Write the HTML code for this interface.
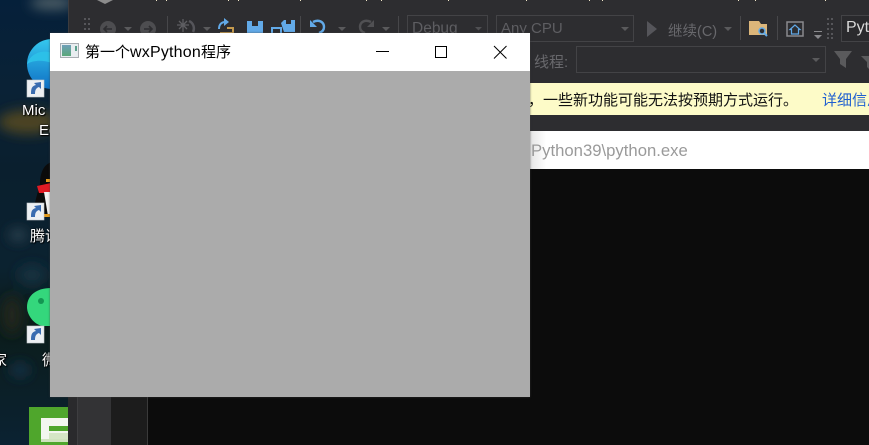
<!DOCTYPE html>
<html><head><meta charset="utf-8">
<style>
html,body{margin:0;padding:0;background:#0c0c0c}
#r{position:relative;width:869px;height:445px;overflow:hidden;background:#0c0c0c;font-family:"Liberation Sans","Noto Sans CJK SC",sans-serif}
.a{position:absolute}
.t{position:absolute;white-space:nowrap}
.dt{color:#fff;font-size:15px;text-shadow:0 0 2px #000,1px 1px 1px #000}
.box{position:absolute;box-sizing:border-box;border:1px solid #434346}
.dn{position:absolute;width:0;height:0;border-left:4px solid transparent;border-right:4px solid transparent;border-top:4px solid #5a5a5c}
</style></head><body><div id="r">

<!-- desktop -->
<svg class="a" style="left:0;top:0" width="70" height="445" viewBox="0 0 70 445">
<defs>
<linearGradient id="bg" x1="0" y1="0" x2="0" y2="1"><stop offset="0" stop-color="#05203a"/><stop offset=".2" stop-color="#0a2236"/><stop offset=".38" stop-color="#0a1f2e"/><stop offset=".6" stop-color="#0b2230"/><stop offset=".72" stop-color="#0b1c1a"/><stop offset="1" stop-color="#0b2232"/></linearGradient>
<filter id="b" x="-50%" y="-50%" width="200%" height="200%"><feGaussianBlur stdDeviation="6"/></filter>
<linearGradient id="ed" x1="0" y1="0" x2="0" y2="1"><stop offset="0" stop-color="#35c8ee"/><stop offset="1" stop-color="#0f6fc4"/></linearGradient>
</defs>
<rect width="70" height="445" fill="url(#bg)"/>
<g filter="url(#b)">
<ellipse cx="52" cy="3" rx="22" ry="6" fill="#56666c"/>
<ellipse cx="28" cy="122" rx="30" ry="12" fill="#4d4420"/>
<ellipse cx="18" cy="235" rx="9" ry="6" fill="#2f4552"/>
<ellipse cx="12" cy="315" rx="10" ry="20" fill="#20281a"/>
<ellipse cx="32" cy="275" rx="14" ry="10" fill="#15303f"/>
<ellipse cx="20" cy="370" rx="10" ry="7" fill="#183246"/>
</g>
<!-- edge icon -->
<circle cx="52" cy="64" r="25" fill="url(#ed)"/>
<path d="M27 64c4-12 18-15 27-10 5 3 5 8 3 12-8-6-22-7-30-2z" fill="#2cc0e8"/>
<!-- qq -->
<path d="M33 214c2-14 5-22 7-30 0-14 6-22 14-22h16v52z" fill="#0b0b0b"/>
<path d="M37 186l14-3h19v10H39z" fill="#e01b24"/>
<path d="M44 192h26v24H48z" fill="#f4f4f4"/>
<rect x="46" y="179" width="6" height="3" fill="#e39b1d"/>
<rect x="42" y="214" width="10" height="3" fill="#e39b1d"/>
<!-- wechat -->
<path d="M27 307c0-12 10-19 24-19h19v38H50l-7 0c-9-1-16-11-16-19z" fill="#34d77c"/>
<circle cx="41" cy="301" r="3" fill="#139652"/>
<!-- green app -->
<rect x="29" y="407" width="41" height="38" fill="#4fa62c"/>
<rect x="41" y="418" width="29" height="21" fill="#f3f6ef"/>
<rect x="49" y="426" width="21" height="5" fill="#4fa62c"/>
<rect x="49" y="433" width="21" height="6" fill="#d5e6c5"/>
<rect x="41" y="439" width="29" height="3" fill="#cfe3bd"/>
<!-- shortcuts -->
<g id="s"><rect x="27" y="80" width="17" height="17" fill="#eceff3" stroke="#c4c8cc" stroke-width=".6"/><path d="M31 94c0-6 1-8 5-9l-2-2 7-1 0 7-2-2c-3 1-4 3-4 7z" fill="#3a6cb0"/></g>
<use href="#s" y="123"/>
<use href="#s" y="246"/>
</svg>
<div class="t dt" style="left:22px;top:102px">Mic</div>
<div class="t dt" style="left:39px;top:122px">Ed</div>
<div class="t dt" style="left:30px;top:225px;width:20px;overflow:hidden">腾讯</div>
<div class="t dt" style="left:-8px;top:349px">家</div>
<div class="t dt" style="left:42px;top:349px;width:8px;overflow:hidden">微</div>

<!-- VS -->
<div class="a" style="left:68px;top:0;width:801px;height:131px;background:#2d2d30"></div>
<div class="a" style="left:68px;top:0;width:1px;height:445px;background:#3c3c3f"></div>

<!-- toolbar row -->
<svg class="a" style="left:68px;top:0" width="801" height="84" viewBox="68 0 801 84">
<path d="M97 0l8 4 8-4z" fill="#8c8c8c"/>
<g fill="#f0e6c8"><rect x="156" y="0" width="1" height="1"/><rect x="166" y="0" width="1" height="1"/><rect x="228" y="0" width="1" height="1"/><rect x="238" y="0" width="1" height="1"/><rect x="300" y="0" width="1" height="1"/><rect x="366" y="0" width="1" height="1"/><rect x="381" y="0" width="1" height="1"/><rect x="448" y="0" width="1" height="1"/><rect x="526" y="0" width="1" height="1"/><rect x="589" y="0" width="1" height="1"/><rect x="602" y="0" width="1" height="1"/><rect x="738" y="0" width="1" height="1"/><rect x="755" y="0" width="1" height="1"/><rect x="825" y="0" width="1" height="1"/></g>
<!-- grips -->
<g fill="#56565a"><rect x="84" y="18" width="2" height="2"/><rect x="88" y="18" width="2" height="2"/><rect x="84" y="23" width="2" height="2"/><rect x="88" y="23" width="2" height="2"/><rect x="84" y="28" width="2" height="2"/><rect x="88" y="28" width="2" height="2"/>
<rect x="827" y="18" width="2" height="2"/><rect x="831" y="18" width="2" height="2"/><rect x="827" y="23" width="2" height="2"/><rect x="831" y="23" width="2" height="2"/><rect x="827" y="28" width="2" height="2"/><rect x="831" y="28" width="2" height="2"/><rect x="827" y="33" width="2" height="2"/><rect x="831" y="33" width="2" height="2"/>
<rect x="827" y="37" width="2" height="2"/><rect x="831" y="37" width="2" height="2"/></g>
<!-- back/forward -->
<circle cx="108" cy="29" r="8" fill="#4d4d50"/><path d="M112 29h-8m3-3l-3 3 3 3" stroke="#2d2d30" stroke-width="1.600" fill="none"/>
<circle cx="148" cy="29" r="8" fill="#4d4d50"/><path d="M144 29h8m-3-3l3 3-3 3" stroke="#2d2d30" stroke-width="1.600" fill="none"/>
<path d="M124 27h8l-4 4z" fill="#5a5a5c"/>
<rect x="167" y="16" width="1" height="24" fill="#47474a"/>
<!-- new project -->
<path d="M183 19v13M177 25h12M179 21l8 8M187 21l-8 8" stroke="#5e5e62" stroke-width="1.300"/><path d="M189 21a8 8 0 0 1 4 11" stroke="#55555a" stroke-width="2.500" fill="none"/>
<path d="M203 27h8l-4 4z" fill="#5a5a5c"/>
<!-- open -->
<path d="M220 33h13v-5h-6" stroke="#c49a4e" stroke-width="2" fill="none"/>
<path d="M219 29c0-5 3-7 6-7" stroke="#62aae8" stroke-width="2" fill="none"/><path d="M224 18l5 4-5 4z" fill="#62aae8"/>
<!-- save -->
<path d="M247 21h16v12h-16z" fill="#62aae8"/><rect x="252" y="21" width="6" height="5" fill="#2d2d30"/>
<path d="M281 23l3-3h11v12h-11z" fill="#62aae8"/><rect x="286" y="20" width="5" height="4" fill="#2d2d30"/><path d="M272 28h9v6h-9z" fill="none" stroke="#62aae8" stroke-width="2"/>
<rect x="300" y="16" width="1" height="24" fill="#47474a"/>
<!-- undo -->
<path d="M313 22c6-3 11 0 11 5 0 3-2 5-5 6" stroke="#62aae8" stroke-width="2.400" fill="none"/><path d="M310 20v7h7z" fill="#62aae8"/>
<path d="M338 27h8l-4 4z" fill="#5a5a5c"/>
<path d="M371 22c-6-3-11 0-11 5 0 3 2 5 5 6" stroke="#505053" stroke-width="2.400" fill="none"/><path d="M374 20v7h-7z" fill="#505053"/>
<path d="M382 27h8l-4 4z" fill="#5a5a5c"/>
<rect x="398" y="16" width="1" height="24" fill="#47474a"/>
<path d="M475 27h7l-3.500 3.500z" fill="#505053"/>
<!-- play -->
<path d="M647 21l10 8-10 8z" fill="#55555a"/>
<path d="M724 27h8l-4 4z" fill="#5a5a5c"/>
<rect x="740" y="16" width="1" height="24" fill="#47474a"/>
<!-- folder -->
<path d="M749 21h10l2 3h6v11h-18z" fill="#dcb67a"/><circle cx="762" cy="31" r="3" fill="#2d2d30" stroke="#62aae8" stroke-width="1.500"/><path d="M764 33l3 3" stroke="#62aae8" stroke-width="2"/>
<rect x="777" y="16" width="1" height="24" fill="#47474a"/>
<!-- home -->
<rect x="787" y="22" width="16" height="14" fill="#2d2d30" stroke="#8a8a8d" stroke-width="1.500"/>
<path d="M795 25l-5 4.500h1.500v4.500h7v-4.500h1.500z" fill="none" stroke="#62aae8" stroke-width="1.200"/>
<rect x="814" y="31" width="8" height="1" fill="#8a8a8d"/><path d="M814 35h8l-4 4z" fill="#8a8a8d"/>
<!-- funnels -->
<path d="M834 51h18l-6 8v9l-6-4v-5z" fill="#5a5a5c"/>
<path d="M861 56h8v13l-2-2v-5z" fill="#5a5a5c"/>
</svg>

<div class="box" style="left:407px;top:15px;width:81px;height:27px"></div>
<div class="t" style="left:412px;top:20px;font-size:15.500px;color:#5e5e62">Debug</div>
<div class="box" style="left:496px;top:15px;width:138px;height:27px"></div>
<div class="t" style="left:501px;top:20px;font-size:15px;color:#5e5e62">Any CPU</div>
<div class="dn" style="left:621px;top:27px"></div>
<div class="t" style="left:668px;top:20px;font-size:14.500px;color:#68686c">继续(C)</div>
<div class="a" style="left:841px;top:15px;width:28px;height:27px;box-sizing:border-box;border:1px solid #434346;border-right:0;background:#2a2a2d"></div>
<div class="t" style="left:846px;top:19px;font-size:16px;color:#d8d8d8">Pyt</div>

<div class="t" style="left:534px;top:51px;font-size:15px;color:#68686c">线程:</div>
<div class="box" style="left:576px;top:46px;width:250px;height:27px"></div>
<div class="dn" style="left:812px;top:58px"></div>

<!-- yellow bar -->
<div class="a" style="left:68px;top:83px;width:801px;height:32px;background:#fdfbc8"></div>
<div class="t" style="left:528px;top:89px;font-size:15px;color:#111">，一些新功能可能无法按预期方式运行。</div>
<div class="t" style="left:822px;top:89px;font-size:15px;color:#1f5fd0">详细信息</div>

<!-- white input -->
<div class="a" style="left:68px;top:131px;width:801px;height:38px;background:#fff"></div>
<div class="a" style="left:530px;top:131px;width:16px;height:38px;background:linear-gradient(90deg,#e4e4e4,#fff)"></div>
<div class="t" style="left:531px;top:141px;font-size:16.700px;color:#9a9a9a">Python39\python.exe</div>

<!-- console -->
<div class="a" style="left:68px;top:169px;width:801px;height:276px;background:#0c0c0c"></div>
<div class="a" style="left:68px;top:397px;width:10px;height:48px;background:#2a2a2c"></div>
<div class="a" style="left:77px;top:397px;width:33px;height:48px;background:#333335;border-left:1px solid #3e3e40"></div>
<div class="a" style="left:111px;top:397px;width:36px;height:48px;background:#1c1c1c"></div>
<div class="a" style="left:147px;top:397px;width:1px;height:48px;background:#3a3a3a"></div>

<!-- window -->
<div class="a" style="left:50px;top:33px;width:480px;height:364px;background:#ababab;box-shadow:0 0 2px rgba(60,60,60,.7)"></div>
<div class="a" style="left:50px;top:33px;width:480px;height:38px;background:#fff"></div>
<svg class="a" style="left:50px;top:33px" width="480" height="38" viewBox="50 33 480 38">
<defs><linearGradient id="ic" x1="0" y1="0" x2="0" y2="1"><stop offset="0" stop-color="#6f9fb8"/><stop offset="1" stop-color="#5aa87a"/></linearGradient></defs>
<rect x="60.500" y="43.500" width="18" height="14" fill="#e8edf0" stroke="#a8adb2"/>
<rect x="62" y="45" width="9" height="11" fill="url(#ic)"/>
<rect x="75" y="46" width="2" height="5" fill="#5aa08c"/>
<path d="M376 51.500h13" stroke="#000" stroke-width="1"/>
<rect x="435.500" y="46.500" width="11" height="11" fill="none" stroke="#000" stroke-width="1"/>
<path d="M494 46l12.500 12.500M506.500 46L494 58.500" stroke="#000" stroke-width="1"/>
</svg>
<div class="t" style="left:85px;top:41px;font-size:15px;color:#000">第一个<span style="font-size:16px;letter-spacing:.2px">wxPython</span>程序</div>

</div></body></html>
